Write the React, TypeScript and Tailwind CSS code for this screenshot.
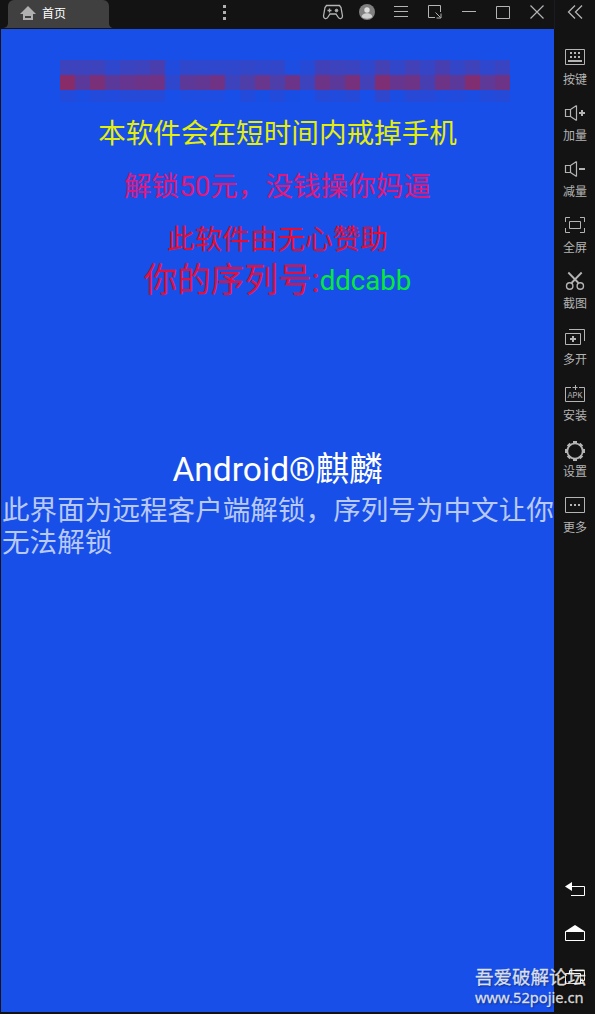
import type { ReactNode } from 'react';

const mosaic: number[][] = [
  [0.2, 0.2, 0.2, 0.12, 0.19, 0.2, 0.27, 0.05, 0.13, 0.13, 0.13, 0.13, 0.14, 0.12, 0.14, 0.03, 0.07, 0.22, 0.2, 0.19, 0.12, 0.24, 0.14, 0.23, 0.16, 0.26, 0.15, 0.21, 0.13, 0.18],
  [0.6, 0.36, 0.53, 0.36, 0.42, 0.45, 0.47, 0.13, 0.37, 0.4, 0.47, 0.2, 0.29, 0.43, 0.29, 0.45, 0.2, 0.46, 0.36, 0.51, 0.23, 0.55, 0.42, 0.46, 0.26, 0.46, 0.36, 0.56, 0.38, 0.46],
  [0.06, 0.02, 0.06, 0.05, 0.07, 0.07, 0.07, 0, 0.03, 0.03, 0.03, 0, 0.06, 0.01, 0.06, 0.01, 0, 0.07, 0.05, 0.07, 0, 0.12, 0.02, 0.09, 0.08, 0.04, 0.05, 0.02, 0.06, 0.07],
];

function Icon({ children }: { children: ReactNode }) {
  return (
    <svg width="24" height="24" viewBox="0 0 24 24" fill="none" stroke="currentColor" strokeWidth="1" className="block shrink-0">
      {children}
    </svg>
  );
}

const tools: { label: string; icon: ReactNode }[] = [
  {
    label: '按键',
    icon: (
      <>
        <path d="M2.5 4.5h19v15h-19z" />
        <path d="M7 8h2m2 0h2m2 0h2M7 12h2m2 0h2m2 0h2M5 16h14" strokeWidth="2" />
      </>
    ),
  },
  {
    label: '加量',
    icon: (
      <>
        <path d="M7 8.5H2.5v7H7M13.5 4.5v15M7.5 8v8M7.5 8.5l6-4M7.5 15.5l6 4" strokeWidth="1.2" />
        <path d="M16 12h6M19 9v6" strokeWidth="2" />
      </>
    ),
  },
  {
    label: '减量',
    icon: (
      <>
        <path d="M7 8.5H2.5v7H7M13.5 4.5v15M7.5 8v8M7.5 8.5l6-4M7.5 15.5l6 4" strokeWidth="1.2" />
        <path d="M16 12h6" strokeWidth="2" />
      </>
    ),
  },
  {
    label: '全屏',
    icon: <path d="M2.5 9V4.5H7M17 4.5h4.5V9M21.5 15v4.5H17M7 19.5H2.5V15M6.5 8.5h11v7h-11z" />,
  },
  {
    label: '截图',
    icon: (
      <>
        <path d="M5.3 3.5L15.5 14M18.7 3.5L8.5 14" strokeWidth="1.8" />
        <circle cx="6.7" cy="17" r="3.2" strokeWidth="1.4" />
        <circle cx="17.3" cy="17" r="3.2" strokeWidth="1.4" />
      </>
    ),
  },
  {
    label: '多开',
    icon: (
      <>
        <path d="M2.5 8.5h15v11h-15zM6 4.5h15.5V16" />
        <path d="M7 14h6M10 11v6" strokeWidth="2" />
      </>
    ),
  },
  {
    label: '安装',
    icon: (
      <>
        <path d="M8 6.5H2.5v14h19v-14H16M9.5 6.5h5M12.5 4v5" />
        <text x="4.5" y="17" textLength="15" lengthAdjust="spacingAndGlyphs" fontSize="9" fill="currentColor" stroke="none" className="font-['Liberation_Mono',monospace]">APK</text>
      </>
    ),
  },
  {
    label: '设置',
    icon: (
      <>
        <circle cx="12" cy="14" r="7.7" strokeWidth="1.8" />
        <path d="M12 4v3M12 21v3M2 14h3M19 14h3M5.2 7.2l2 2M16.8 18.8l2 2M5.200 20.8l2-2M16.800 9.2l2-2" strokeWidth="4" />
      </>
    ),
  },
  {
    label: '更多',
    icon: (
      <>
        <path d="M2.5 4.5h19v15h-19z" />
        <path d="M7 12h2m2 0h2m2 0h2" strokeWidth="2" />
      </>
    ),
  },
];

const windowIcons: ReactNode[] = [
  <>
    <path d="M5.500 5.500h13l1.500 2 1.500 8.500c0 3-3 3.500-4.500 1l-2-3H9l-2 3c-1.500 2.500-4.500 2-4.500-1L4 7.500z" strokeWidth="1.3" />
    <path d="M6.500 10.500h4M8.500 8.500v4" strokeWidth="1.3" />
    <circle cx="15.500" cy="10.500" r="1.300" fill="currentColor" />
  </>,
  <>
    <circle cx="12" cy="12" r="8" fill="#808080" stroke="none" />
    <circle cx="12" cy="10" r="2.7" fill="#dedede" stroke="none" />
    <path d="M6.800 17c0-5 10.400-5 10.400 0-2.500 2.300-7.900 2.300-10.400 0z" fill="#cfcfcf" stroke="none" />
  </>,
  <path d="M5 6.500h14M5 11.500h14M5 16.500h14" />,
  <>
    <path d="M12 17.500H5.500v-12h12V12" />
    <path d="M12.500 12.500l5 5M18 13.500V18h-4.500" />
  </>,
  <path d="M5 11.500h14" />,
  <path d="M5.500 6.500h13v12h-13z" />,
  <path d="M5.500 5.500l13 13M18.500 5.500l-13 13" strokeWidth="1.2" />,
];

function TitleBar() {
  return (
    <header className="flex h-[29px] text-[#b4b4b4]">
      <div className="flex w-[206px]">
        <div className="relative ml-2 flex h-7 w-[101px] items-center rounded-t-md bg-[#404040] pl-3">
          <svg width="112" height="5" viewBox="0 0 112 5" className="absolute -left-1.5 bottom-0">
            <path d="M0 5c4 0 6-2 6-5v5zM107 0c0 3 2 5 5 5h-5z" fill="#404040" />
          </svg>
          <svg width="16" height="16" viewBox="0 0 16 16" className="mt-[-2px] block">
            <path d="M8 1l8 8h-3v6H3V9H0z" fill="#b0b0b0" />
            <path d="M5 12h6" stroke="#404040" strokeWidth="2" />
          </svg>
          <span className="ml-1.5 text-xs leading-4 text-white">首页</span>
        </div>
      </div>
      <div className="flex w-[110px] flex-col gap-[3px] pl-[17px] pt-[5px]">
        <i className="block size-[3px] bg-[#b0b0b0]" />
        <i className="block size-[3px] bg-[#b0b0b0]" />
        <i className="block size-[3px] bg-[#b0b0b0]" />
      </div>
      {windowIcons.map((icon, i) => (
        <div key={i} className="flex w-[34px] justify-center">
          <Icon>{icon}</Icon>
        </div>
      ))}
      <div className="flex grow border-l border-[#181d22] pl-2">
        <Icon>
          <path d="M12 5.500L5.500 12l6.500 6.500M19 5.500L12.500 12l6.500 6.500" strokeWidth="1.3" />
        </Icon>
      </div>
    </header>
  );
}

function Screen() {
  return (
    <main className="ml-px flex h-[983px] w-[553px] shrink-0 flex-col bg-[#184fe8] text-[27.6px] leading-8">
      <div className="ml-[59px] mt-[31px] grid w-[450px] grid-cols-30 grid-rows-[15px_15px_12px]">
        {mosaic.flat().map((alpha, i) => (
          <span key={i} style={{ backgroundColor: `rgba(210, 20, 20, ${alpha})` }} />
        ))}
      </div>
      <p className="mt-4 text-center text-[#e4ee0c]">本软件会在短时间内戒掉手机</p>
      <p className="mt-[21px] text-center text-[#e0187c]">解锁50元，没钱操你妈逼</p>
      <p className="mt-[21px] text-center text-[#e80c30]">此软件由无心赞助</p>
      <p className="flex h-[50px] items-start justify-center">
        <span className="text-[33.6px] leading-[50px] text-[#e01040]">你的序列号:</span>
        <span className="leading-[50px] text-[#08e83c]">ddcabb</span>
      </p>
      <p className="mt-[144px] text-center text-[33.6px] leading-10 text-white">Android®麒麟</p>
      <p className="mt-[5px] whitespace-nowrap pl-px text-[#b9c9f7]">
        此界面为远程客户端解锁，序列号为中文让你
        <br />
        无法解锁
      </p>
    </main>
  );
}

function Sidebar() {
  return (
    <aside className="flex h-[985px] grow flex-col items-start pl-[9px] pt-4 text-[#b4b4b4]">
      {tools.map((tool) => (
        <button key={tool.label} className="flex h-14 shrink-0 flex-col items-center text-xs leading-[22px]">
          <Icon>{tool.icon}</Icon>
          {tool.label}
        </button>
      ))}
      <nav className="mt-[328px] flex flex-col gap-5 text-white">
        <Icon>
          <path d="M2 9.500l7-4.500v9z" fill="currentColor" stroke="none" />
          <path d="M8 9.500h13.500v9H8" />
        </Icon>
        <Icon>
          <path d="M2.500 10.500h19v9h-19z" />
          <path d="M2 10.500L12 4l10 6.500z" fill="currentColor" stroke="none" />
        </Icon>
        <Icon>
          <path d="M2.500 8.500h15v10h-15zM6.500 8V5.500h15v10H18" />
        </Icon>
      </nav>
    </aside>
  );
}

export default function App() {
  return (
    <div className="relative h-[1014px] w-[595px] overflow-hidden bg-[#131313] font-['Roboto','Noto_Sans_CJK_SC',sans-serif]">
      <TitleBar />
      <div className="flex">
        <Screen />
        <Sidebar />
      </div>
      <div className="absolute left-[475px] top-[966px] whitespace-nowrap font-['Noto_Sans','Noto_Sans_CJK_SC',sans-serif] text-white/80 [-webkit-text-stroke:0.3px_rgba(255,255,255,0.7)] [text-shadow:1px_1px_2px_rgba(0,0,0,0.5)]">
        <p className="text-[18.5px] leading-[22px]">吾爱破解论坛</p>
        <p className="text-[14.7px] leading-[18px]">www.52pojie.cn</p>
      </div>
    </div>
  );
}
